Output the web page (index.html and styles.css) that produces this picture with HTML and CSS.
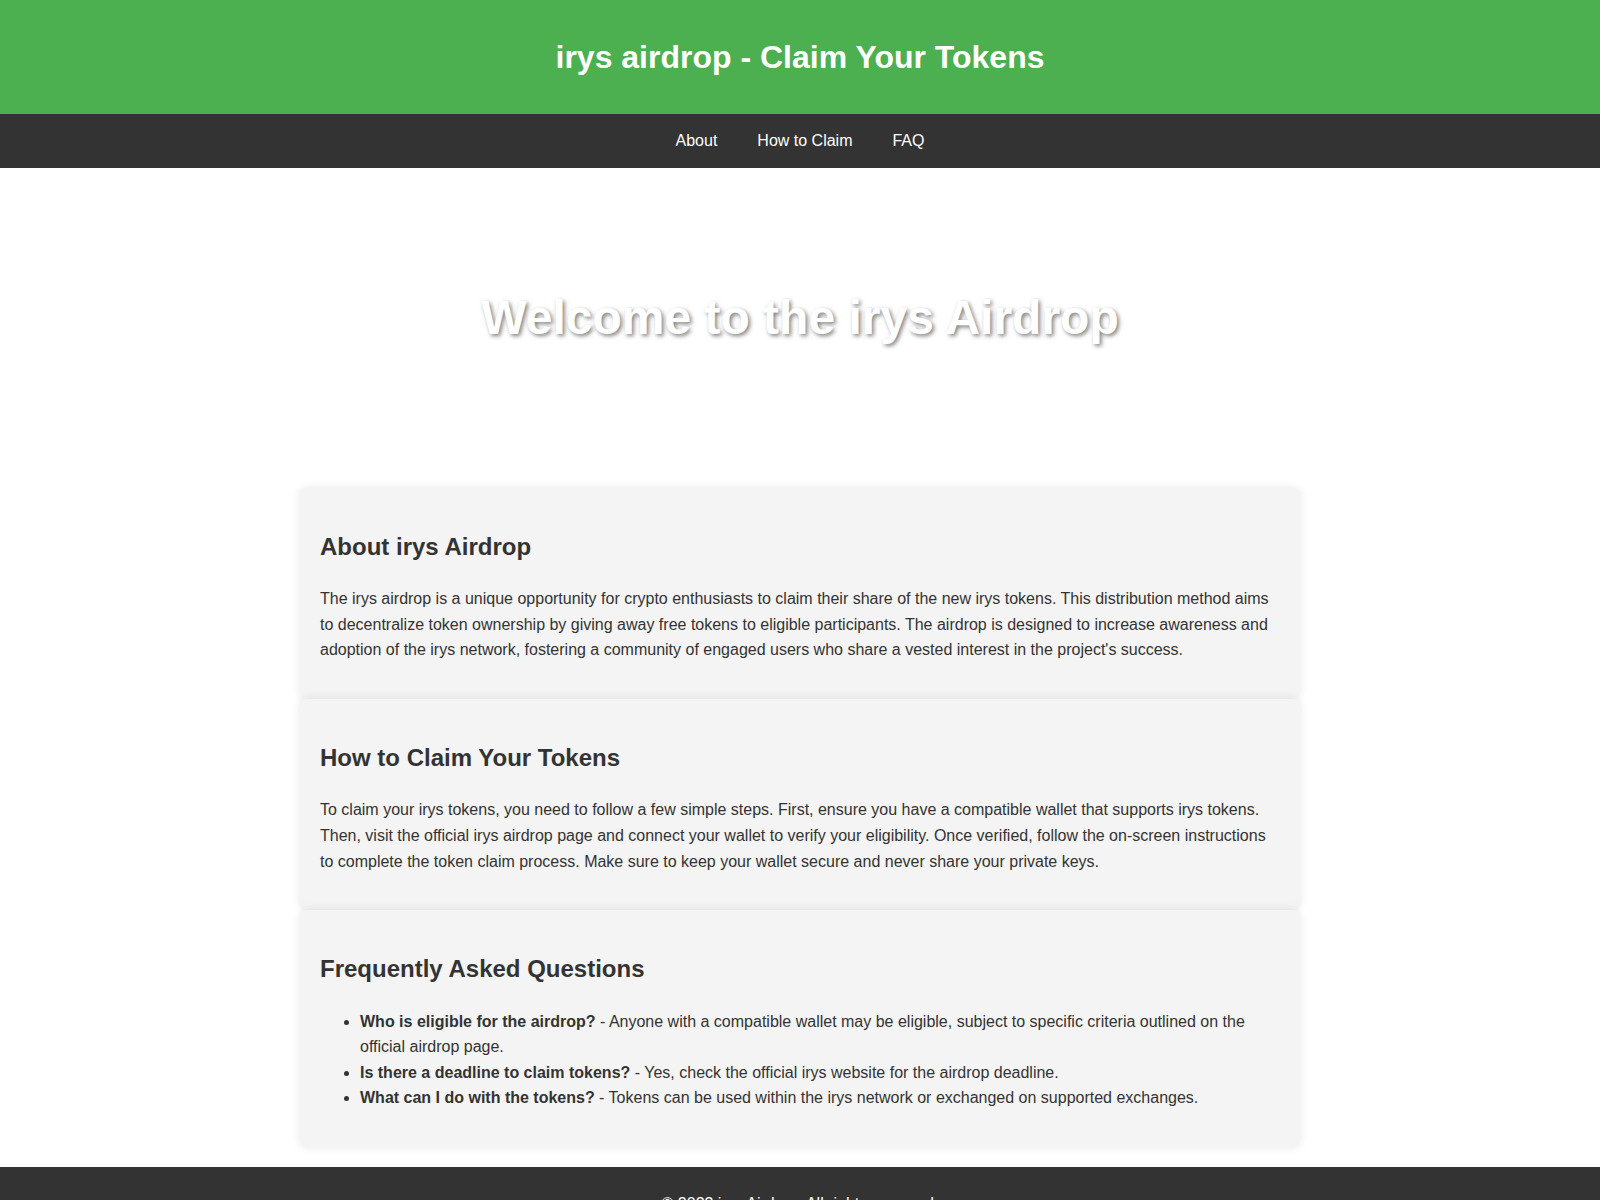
FILE: index.html
```html
<!DOCTYPE html>
<html lang="en">
<head>
<meta charset="UTF-8">
<meta name="viewport" content="width=device-width, initial-scale=1.0">
<title>irys airdrop - Claim Your Tokens</title>
<link rel="stylesheet" href="styles.css">
</head>
<body>
<header class="site-header">
  <h1 class="site-title">irys airdrop - Claim Your Tokens</h1>
</header>
<nav class="site-nav">
  <a href="#about" class="nav-link">About</a>
  <a href="#claim" class="nav-link">How to Claim</a>
  <a href="#faq" class="nav-link">FAQ</a>
</nav>
<section class="hero">
  <h2 class="hero-title">Welcome to the irys Airdrop</h2>
</section>
<main class="content">
  <section id="about" class="card">
    <h2 class="card-title">About irys Airdrop</h2>
    <p class="card-text">The irys airdrop is a unique opportunity for crypto enthusiasts to claim their share of the new irys tokens. This distribution method aims to decentralize token ownership by giving away free tokens to eligible participants. The airdrop is designed to increase awareness and adoption of the irys network, fostering a community of engaged users who share a vested interest in the project's success.</p>
  </section>
  <section id="claim" class="card">
    <h2 class="card-title">How to Claim Your Tokens</h2>
    <p class="card-text">To claim your irys tokens, you need to follow a few simple steps. First, ensure you have a compatible wallet that supports irys tokens. Then, visit the official irys airdrop page and connect your wallet to verify your eligibility. Once verified, follow the on-screen instructions to complete the token claim process. Make sure to keep your wallet secure and never share your private keys.</p>
  </section>
  <section id="faq" class="card">
    <h2 class="card-title">Frequently Asked Questions</h2>
    <ul class="faq-list">
      <li><strong>Who is eligible for the airdrop?</strong> - Anyone with a compatible wallet may be eligible, subject to specific criteria outlined on the official airdrop page.</li>
      <li><strong>Is there a deadline to claim tokens?</strong> - Yes, check the official irys website for the airdrop deadline.</li>
      <li><strong>What can I do with the tokens?</strong> - Tokens can be used within the irys network or exchanged on supported exchanges.</li>
    </ul>
  </section>
</main>
<footer class="site-footer">
  <p class="footer-text">&copy; 2023 irys Airdrop. All rights reserved.</p>
</footer>
</body>
</html>
```

FILE: styles.css
```css
body {
  margin: 0;
  padding: 0;
  font-family: Arial, "Liberation Sans", sans-serif;
  font-size: 16px;
  line-height: 1.6;
  color: #333;
  background: #fff;
}

/* Top banner */
.site-header {
  background: #4caf50;
  color: #fff;
  text-align: center;
  padding: 31px 20px;
}

.site-title {
  margin: 0;
  font-size: 32px;
  line-height: 52px;
}

/* Navigation bar */
.site-nav {
  background: #333;
  display: flex;
  justify-content: center;
  padding: 14px 0;
  line-height: 26px;
}

.nav-link {
  color: #fff;
  text-decoration: none;
  margin: 0 20px;
}

/* Hero */
.hero {
  text-align: center;
  padding: 112px 20px 111px;
  color: #fff;
}

.hero-title {
  margin: 0;
  font-size: 48px;
  line-height: 1.6;
  text-shadow: 2px 2px 4px rgba(0, 0, 0, 0.5);
}

/* Content cards */
.content {
  max-width: 1000px;
  margin: 0 auto;
  padding: 20px 0;
}

.card {
  background: #f4f4f4;
  padding: 20px;
  border-radius: 8px;
  box-shadow: 0 0 10px rgba(0, 0, 0, 0.1);
}

.card-title {
  font-size: 24px;
  margin: 20px 0;
}

.card-text {
  margin: 16px 0;
}

.faq-list {
  margin: 16px 0;
  padding-left: 40px;
}

/* Footer */
.site-footer {
  background: #333;
  color: #fff;
  text-align: center;
  padding: 24px 20px;
}

.footer-text {
  margin: 0;
}
```
